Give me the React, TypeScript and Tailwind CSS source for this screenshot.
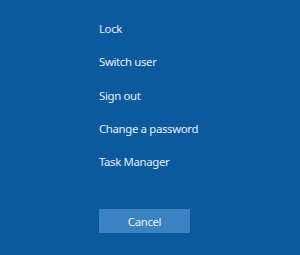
const items = ["Lock", "Switch user", "Sign out", "Change a password", "Task Manager"];

export default function App() {
  return (
    <div
      className="w-[300px] h-[255px] bg-[#0b5a9f] pl-[99px] pt-[20px] text-[#e6eef6] tracking-[-0.35px]"
      style={{ fontFamily: '"Noto Sans", "Open Sans", sans-serif' }}
    >
      <ul className="flex flex-col">
        {items.map((item) => (
          <li key={item} className="h-[33.3px] leading-[18px] text-[11.4px]">
            {item}
          </li>
        ))}
      </ul>
      <button className="mt-[23px] w-[91px] h-[24px] bg-[#3a83c0] text-[#e6eef6] text-[11.4px]">
        Cancel
      </button>
    </div>
  );
}
